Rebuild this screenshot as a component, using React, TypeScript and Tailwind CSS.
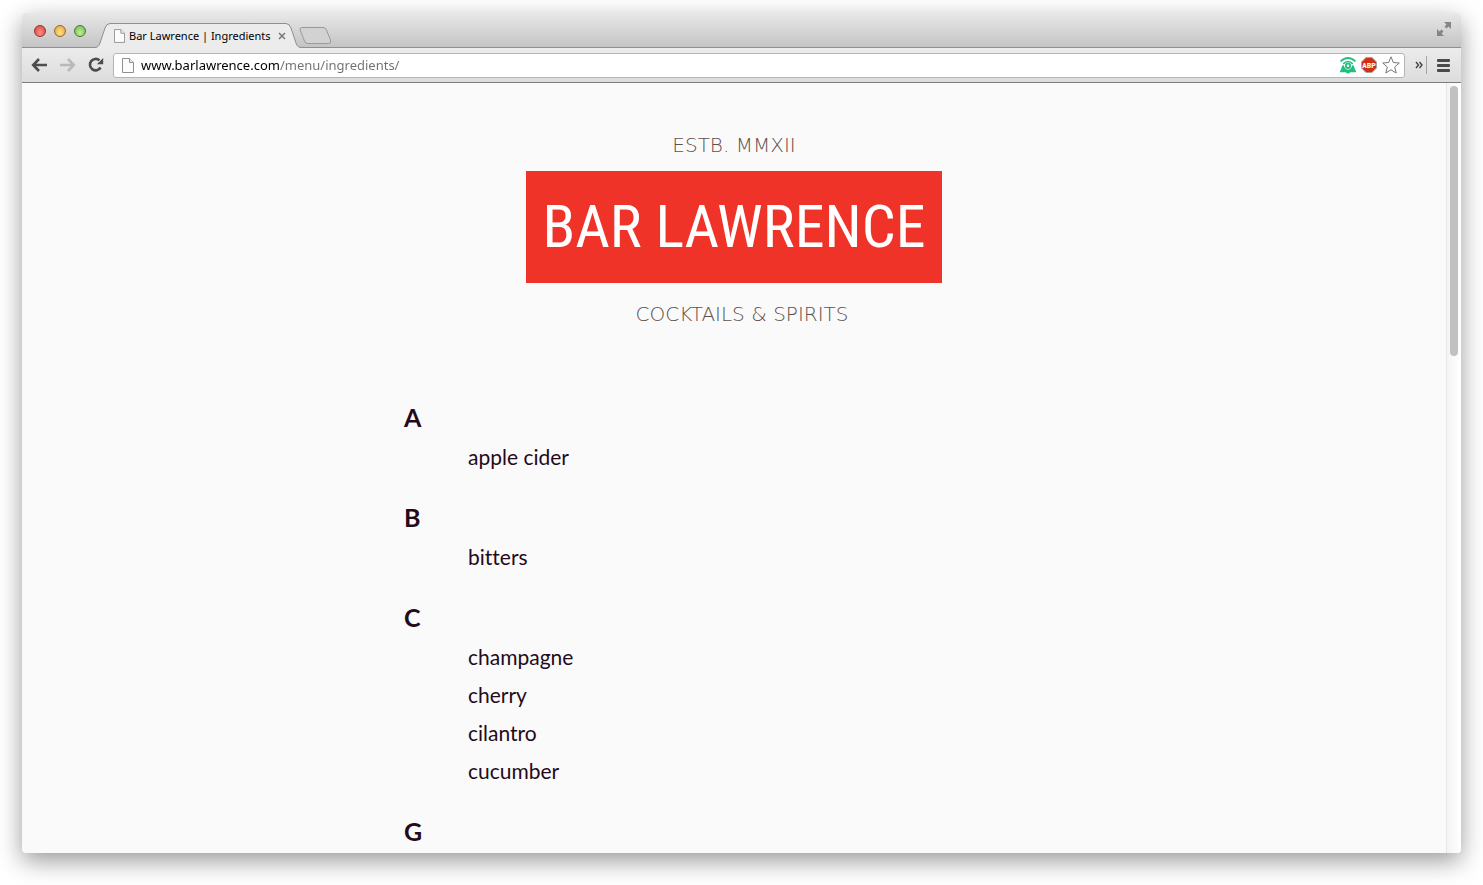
import React from "react";

const sections = [
  { letter: "A", items: ["apple cider"] },
  { letter: "B", items: ["bitters"] },
  { letter: "C", items: ["champagne", "cherry", "cilantro", "cucumber"] },
  { letter: "G", items: [] as string[] },
];

function PageIcon({ className }: { className: string }) {
  return (
    <svg viewBox="0 0 12 15" className={className} aria-hidden="true">
      <path d="M.5.5h7l4 4v10H.5z" fill="#fcfcfc" stroke="#8f8f8f" />
      <path d="M7.500 .5v4h4" fill="#eee" stroke="#8f8f8f" />
    </svg>
  );
}

function TrafficLights() {
  return (
    <div className="flex gap-2 pt-3 pl-3">
      <button aria-label="Close window" className="size-3 rounded-full border border-[#8d3431] bg-radial-[at_50%_70%] from-[#ff8f86] to-[#d8423c]" />
      <button aria-label="Minimize window" className="size-3 rounded-full border border-[#96682a] bg-radial-[at_50%_70%] from-[#ffe08a] to-[#e2a13a]" />
      <button aria-label="Zoom window" className="size-3 rounded-full border border-[#4c7a35] bg-radial-[at_50%_70%] from-[#c4ee9c] to-[#6bb44c]" />
    </div>
  );
}

function TabStrip() {
  return (
    <div className="flex h-[35px] items-start border-b border-[#8f8f8f] bg-linear-to-b from-[#e8e8e8] to-[#c4c4c4]">
      <TrafficLights />
      <div className="ml-2 grid pt-[10px]">
        <svg viewBox="0 0 208 25" className="col-start-1 row-start-1 h-[25px] w-[208px]" aria-hidden="true">
          <path d="M0 25C4 24.500 5 23 6 20L11 5Q12.500 .5 16 .5H192Q195.500 .5 197 5L202 20C203 23 204 24.500 208 25Z" fill="#ececec" />
          <path d="M0 24.500C4 24.300 5 23 6 20L11 5Q12.500 .5 16 .5H192Q195.500 .5 197 5L202 20C203 23 204 24.300 208 24.500" fill="none" stroke="#8f8f8f" />
        </svg>
        <div className="col-start-1 row-start-1 flex h-[26px] items-center pl-5">
          <PageIcon className="h-[14px] w-[11px]" />
          <span className="ml-1 font-['Noto_Sans',sans-serif] text-[11px] leading-6 whitespace-nowrap text-black">Bar Lawrence | Ingredients</span>
          <button aria-label="Close tab" className="ml-[7px] flex size-2 items-center justify-center">
            <svg viewBox="0 0 8 8" className="size-2" aria-hidden="true">
              <path d="M1 1l6 6M7 1L1 7" stroke="#777" strokeWidth="1.500" />
            </svg>
          </button>
        </div>
      </div>
      <button aria-label="New tab" className="-ml-[3px] pt-[14px]">
        <svg viewBox="0 0 33 17" className="h-[17px] w-[33px]" aria-hidden="true">
          <path d="M3 .5H24Q26.500 .5 27.500 3L31.500 13Q32.500 16.500 29.500 16.500H9Q6.500 16.500 5.500 14L1 3Q.5 .5 3 .5Z" fill="#d2d2d2" stroke="#999" />
        </svg>
      </button>
      <button aria-label="Enter full screen" className="mt-2 mr-[9px] ml-auto">
        <svg viewBox="0 0 16 16" className="size-4" aria-hidden="true" fill="#858585">
          <path d="M8 1h7v7l-2.500-2.500-2 2L8.500 5.500l2-2z" />
          <path d="M1 8v7h7l-2.500-2.500 2-2L5.500 8.500l-2 2z" />
        </svg>
      </button>
    </div>
  );
}

function Toolbar() {
  return (
    <div className="flex h-[35px] items-center border-b border-[#7c7c7c] bg-linear-to-b from-[#ececec] to-[#dcdcdc]">
      <button aria-label="Back" className="ml-[9px]">
        <svg viewBox="0 0 16 14" className="h-[14px] w-4" fill="none" stroke="#4d4d4d" strokeWidth="2.600" aria-hidden="true">
          <path d="M8 1L2.200 7L8 13M2.500 7H16" />
        </svg>
      </button>
      <button aria-label="Forward" className="ml-[13px]">
        <svg viewBox="0 0 16 14" className="h-[14px] w-4" fill="none" stroke="#b9b9b9" strokeWidth="2.600" aria-hidden="true">
          <path d="M8 1L13.800 7L8 13M13.500 7H0" />
        </svg>
      </button>
      <button aria-label="Reload" className="ml-3">
        <svg viewBox="0 0 16 16" className="size-4" aria-hidden="true">
          <path d="M11.500 3.400A5.700 5.700 0 1 0 12.600 10.500" fill="none" stroke="#4d4d4d" strokeWidth="2.600" />
          <path d="M15.200 1V7.300H8.900Z" fill="#4d4d4d" />
        </svg>
      </button>
      <div className="ml-[9px] flex h-[25px] min-w-0 flex-1 items-center rounded-[3px] border border-[#b4b4b4] bg-white pr-1 pl-2">
        <PageIcon className="h-[15px] w-3 shrink-0" />
        <input
          aria-label="Address"
          defaultValue="www.barlawrence.com/menu/ingredients/"
          className="ml-[7px] h-5 min-w-0 flex-1 bg-linear-to-r from-black from-[139px] to-[#707070] to-[139px] bg-clip-text font-['Noto_Sans',sans-serif] text-[13px] text-transparent caret-black outline-none"
        />
        <button aria-label="Notifier">
          <svg viewBox="0 0 18 17" className="h-[17px] w-[18px]" aria-hidden="true">
            <path d="M1.500 4.500Q9-2.500 16.500 4.500M4.300 7Q9 2 13.700 7" fill="none" stroke="#1fc07d" strokeWidth="1.700" />
            <circle cx="9" cy="8.800" r="2.200" fill="none" stroke="#1fc07d" strokeWidth="1.800" />
            <path d="M3 8.800L4.800 8.300Q5.500 12.200 9 12.700Q12.500 12.200 13.200 8.300L15 8.800Q15.200 12 17.500 15.200H11.300Q9 17.800 6.700 15.200H.5Q2.800 12 3 8.800Z" fill="#1fc07d" />
          </svg>
        </button>
        <button aria-label="Ad blocker" className="ml-1">
          <svg viewBox="0 0 16 16" className="size-4" aria-hidden="true">
            <path d="M5 .5h6L15.500 5v6L11 15.500H5L.5 11V5z" fill="#cf3016" stroke="#a9a09c" />
            <text x="8" y="11" textAnchor="middle" fontSize="8" fontWeight="700" fill="#fff" fontFamily="Roboto Condensed, Liberation Sans Narrow, sans-serif">ABP</text>
          </svg>
        </button>
        <button aria-label="Bookmark this page" className="ml-[5px]">
          <svg viewBox="0 0 18 18" className="size-[18px]" aria-hidden="true">
            <path d="M9 .8L11.300 6.500L17.300 7L12.700 11L14.200 17L9 13.800L3.800 17L5.300 11L.7 7L6.700 6.500Z" fill="#fff" stroke="#777" strokeLinejoin="round" />
          </svg>
        </button>
      </div>
      <button aria-label="More extensions" className="ml-[10px]">
        <svg viewBox="0 0 8 8" className="size-2" aria-hidden="true">
          <path d="M1 1l2.500 3L1 7M4.500 1L7 4L4.500 7" fill="none" stroke="#444" strokeWidth="1.400" />
        </svg>
      </button>
      <div className="ml-[3px] h-[18px] w-px bg-[#a5a5a5]" />
      <button aria-label="Menu" className="mr-[11px] ml-[10px]">
        <svg viewBox="0 0 13 13" className="size-[13px]" aria-hidden="true" fill="#4a4a4a">
          <rect y="0" width="13" height="3" rx="1" />
          <rect y="5" width="13" height="3" rx="1" />
          <rect y="10" width="13" height="3" rx="1" />
        </svg>
      </button>
    </div>
  );
}

function Masthead() {
  return (
    <header className="flex flex-col items-center pt-[50px] font-['DejaVu_Sans',sans-serif] text-[#5f504c]">
      <p className="text-xl leading-6 font-extralight">ESTB. MMXII</p>
      <h1 className="mt-[14px] flex h-28 w-[416px] max-w-full items-center justify-center bg-[#ef3329] font-['Roboto_Condensed','Liberation_Sans_Narrow',sans-serif] text-[60px] leading-none whitespace-nowrap text-white">
        BAR LAWRENCE
      </h1>
      <p className="mt-[19px] pl-4 text-xl leading-6 font-extralight">COCKTAILS &amp; SPIRITS</p>
    </header>
  );
}

export default function App() {
  return (
    <div className="h-screen overflow-hidden bg-white px-[22px] pt-[13px] pb-8">
      <div className="flex h-full flex-col overflow-hidden rounded-[4px] bg-[#fafafa] shadow-[0_8px_24px_rgba(0,0,0,0.4)]">
        <TabStrip />
        <Toolbar />
        <div className="flex min-h-0 flex-1">
          <main className="min-w-0 flex-1 overflow-hidden">
            <Masthead />
            <div className="mx-auto flex max-w-[660px] flex-col gap-6 pt-[74px] font-[Lato,sans-serif] text-[#240a1a]">
              {sections.map((section) => (
                <section key={section.letter}>
                  <h2 className="mb-1 text-[25px] leading-[34px] font-bold">{section.letter}</h2>
                  <ul className="pl-16 text-[21px] leading-[38px] [font-variant-ligatures:none]">
                    {section.items.map((item) => (
                      <li key={item}>{item}</li>
                    ))}
                  </ul>
                </section>
              ))}
            </div>
          </main>
          <div className="flex w-[15px] justify-center border-l border-[#e6e6e6] bg-linear-to-r from-[#f4f4f4] to-white pt-[3px]">
            <div className="h-[270px] w-2 rounded-full bg-[#c1c1c1]" />
          </div>
        </div>
      </div>
    </div>
  );
}
